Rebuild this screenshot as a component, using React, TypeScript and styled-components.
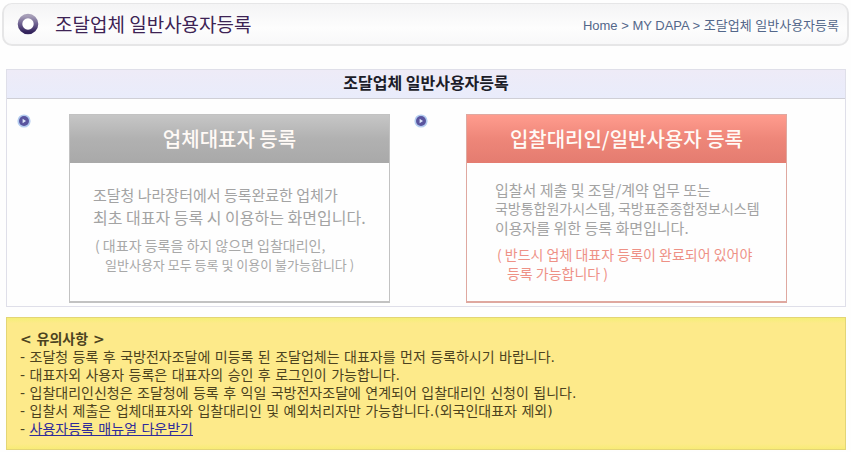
import React from "react";
import styled, { createGlobalStyle, css } from "styled-components";

const GlobalStyle = createGlobalStyle`
  * { box-sizing: border-box; }
  body {
    margin: 0;
    background: #fefefe;
    font-family: "Liberation Sans", "Noto Sans CJK KR", sans-serif;
  }
`;

const Page = styled.div`
  padding: 3px 2px 2px;
`;

const PageHeader = styled.header`
  display: flex;
  align-items: center;
  gap: 16px;
  height: 43px;
  padding: 0 8px 0 13px;
  border: 2px solid #e6e6e7;
  border-top-width: 1px;
  border-radius: 10px;
  background: linear-gradient(#f4f4f5, #fdfdfd 60%, #f8f8f9);
`;

const PageTitle = styled.h1`
  flex: 1;
  margin: 0;
  color: #3d2354;
  font: 400 19px/28px "Noto Sans CJK KR", sans-serif;
`;

const Breadcrumb = styled.nav`
  padding-top: 4px;
  color: #53678a;
  font-size: 13px;
  line-height: 20px;
  white-space: nowrap;
`;

const Crumb = styled.a`
  color: inherit;
  text-decoration: none;
`;

const Main = styled.main`
  display: flex;
  flex-direction: column;
  gap: 10px;
  margin: 23px 3px 0 4px;
`;

const Panel = styled.section`
  border: 1px solid #dfdfe9;
  background: #fefefe;
`;

const PanelTitle = styled.h2`
  margin: 0;
  padding-bottom: 4px;
  border-bottom: 1px solid #cfcfd6;
  background: linear-gradient(#eeebf7, #e9ecfb);
  color: #1c1c28;
  font: 700 16px/24px "Noto Sans CJK KR", sans-serif;
  text-align: center;
`;

const Choices = styled.div`
  display: grid;
  grid-template-columns: 9fr 10fr;
  padding: 15px 0 3px;
`;

const Choice = styled.div`
  display: flex;
  align-items: flex-start;
  gap: 38px;
  padding-left: 10px;
`;

type Tone = "gray" | "coral";

const Card = styled.a<{ $tone: Tone }>`
  display: flex;
  flex-direction: column;
  flex: 0 1 321px;
  min-height: 189px;
  border: 1px solid ${(p) => (p.$tone === "gray" ? "#c2c2c2" : "#dfa8a0")};
  border-bottom-width: 2px;
  background: #fefefe;
  color: #a3a3a3;
  font-family: "Noto Sans CJK KR", sans-serif;
  text-decoration: none;
`;

const CardTitle = styled.h3<{ $tone: Tone }>`
  margin: 0;
  background: ${(p) =>
    p.$tone === "gray"
      ? "linear-gradient(#c6c6c6, #b1b1b1 50%, #a9a9a9)"
      : "linear-gradient(#ff9c8e, #ee8679 50%, #e47c70)"};
  color: #fffaf6;
  font-size: 20px;
  font-weight: 500;
  line-height: 48px;
  text-align: center;
`;

const CardBody = styled.div<{ $tone: Tone }>`
  display: flex;
  flex-direction: column;
  gap: 8px;
  ${(p) =>
    p.$tone === "gray"
      ? css`
          padding: 21px 8px 0 23px;
        `
      : css`
          padding: 17px 8px 0 28px;
        `}
`;

const Lines = styled.p<{ $leading: number }>`
  margin: 0;
  line-height: ${(p) => p.$leading}px;
  white-space: nowrap;
`;

const Line = styled.span<{ $size: number }>`
  display: block;
  font-size: ${(p) => p.$size}px;
`;

const Caution = styled(Lines)<{ $tone: Tone }>`
  padding-left: 2px;
  color: ${(p) => (p.$tone === "gray" ? "#a8a8a8" : "#ee9186")};
`;

const IndentedLine = styled(Line)`
  padding-left: 10px;
`;

const Notice = styled.section`
  padding: 12px 14px 11px 13px;
  border: 1px solid #e3d576;
  background: linear-gradient(#f5ef78, #fdea8a 4%, #fdea8a 96%, #f8ec76);
  color: #4c431f;
  font: 400 14px/18px "DejaVu Sans", "Noto Sans CJK KR", sans-serif;
`;

const NoticeTitle = styled.h2`
  margin: 0;
  font-size: 14px;
  font-weight: 700;
  line-height: 18px;
`;

const NoticeList = styled.ul`
  margin: 0;
  padding: 0;
  list-style: none;
`;

const NoticeItem = styled.li`
  &::before {
    content: "- ";
  }
`;

const ManualLink = styled.a`
  color: #2f2b9a;
  text-decoration: underline;
`;

const RingIcon = () => (
  <svg width="22" height="22" viewBox="0 0 22 22" aria-hidden="true">
    <defs>
      <linearGradient id="ring" x1="0" y1="0" x2="0" y2="1">
        <stop offset="0" stopColor="#a79fb8" />
        <stop offset="0.5" stopColor="#6d6090" />
        <stop offset="1" stopColor="#33235c" />
      </linearGradient>
    </defs>
    <circle cx="11" cy="11" r="8" fill="#fff" stroke="url(#ring)" strokeWidth="4.6" />
  </svg>
);

const BulletIcon = () => (
  <svg width="14" height="14" viewBox="0 0 14 14" aria-hidden="true">
    <circle cx="7" cy="7" r="6.6" fill="#b4cdf0" />
    <circle cx="7" cy="7" r="5" fill="#5a559f" />
    <path d="M5.6 4.8 9 7 5.6 9.2Z" fill="#dfe6fa" />
  </svg>
);

const notices = [
  "조달청 등록 후 국방전자조달에 미등록 된 조달업체는 대표자를 먼저 등록하시기 바랍니다.",
  "대표자외 사용자 등록은 대표자의 승인 후 로그인이 가능합니다.",
  "입찰대리인신청은 조달청에 등록 후 익일 국방전자조달에 연계되어 입찰대리인 신청이 됩니다.",
  "입찰서 제출은 업체대표자와 입찰대리인 및 예외처리자만 가능합니다.(외국인대표자 제외)",
];

export default function App() {
  return (
    <Page>
      <GlobalStyle />
      <PageHeader>
        <RingIcon />
        <PageTitle>조달업체 일반사용자등록</PageTitle>
        <Breadcrumb>
          <Crumb href="#home">Home</Crumb> &gt; <Crumb href="#my">MY DAPA</Crumb> &gt; 조달업체 일반사용자등록
        </Breadcrumb>
      </PageHeader>
      <Main>
        <Panel>
          <PanelTitle>조달업체 일반사용자등록</PanelTitle>
          <Choices>
            <Choice>
              <BulletIcon />
              <Card href="#representative" $tone="gray">
                <CardTitle $tone="gray">업체대표자 등록</CardTitle>
                <CardBody $tone="gray">
                  <Lines $leading={22}>
                    <Line $size={15}>조달청 나라장터에서 등록완료한 업체가</Line>
                    <Line $size={16}>최초 대표자 등록 시 이용하는 화면입니다.</Line>
                  </Lines>
                  <Caution $leading={19} $tone="gray">
                    <Line $size={14}>( 대표자 등록을 하지 않으면 입찰대리인,</Line>
                    <IndentedLine $size={13}>일반사용자 모두 등록 및 이용이 불가능합니다 )</IndentedLine>
                  </Caution>
                </CardBody>
              </Card>
            </Choice>
            <Choice>
              <BulletIcon />
              <Card href="#agent" $tone="coral">
                <CardTitle $tone="coral">입찰대리인/일반사용자 등록</CardTitle>
                <CardBody $tone="coral">
                  <Lines $leading={19}>
                    <Line $size={15}>입찰서 제출 및 조달/계약 업무 또는</Line>
                    <Line $size={14}>국방통합원가시스템, 국방표준종합정보시스템</Line>
                    <Line $size={15}>이용자를 위한 등록 화면입니다.</Line>
                  </Lines>
                  <Caution $leading={19} $tone="coral">
                    <Line $size={14}>( 반드시 업체 대표자 등록이 완료되어 있어야</Line>
                    <IndentedLine $size={14}>등록 가능합니다 )</IndentedLine>
                  </Caution>
                </CardBody>
              </Card>
            </Choice>
          </Choices>
        </Panel>
        <Notice>
          <NoticeTitle>&lt; 유의사항 &gt;</NoticeTitle>
          <NoticeList>
            {notices.map((text) => (
              <NoticeItem key={text}>{text}</NoticeItem>
            ))}
            <NoticeItem>
              <ManualLink href="#manual">사용자등록 매뉴얼 다운받기</ManualLink>
            </NoticeItem>
          </NoticeList>
        </Notice>
      </Main>
    </Page>
  );
}
